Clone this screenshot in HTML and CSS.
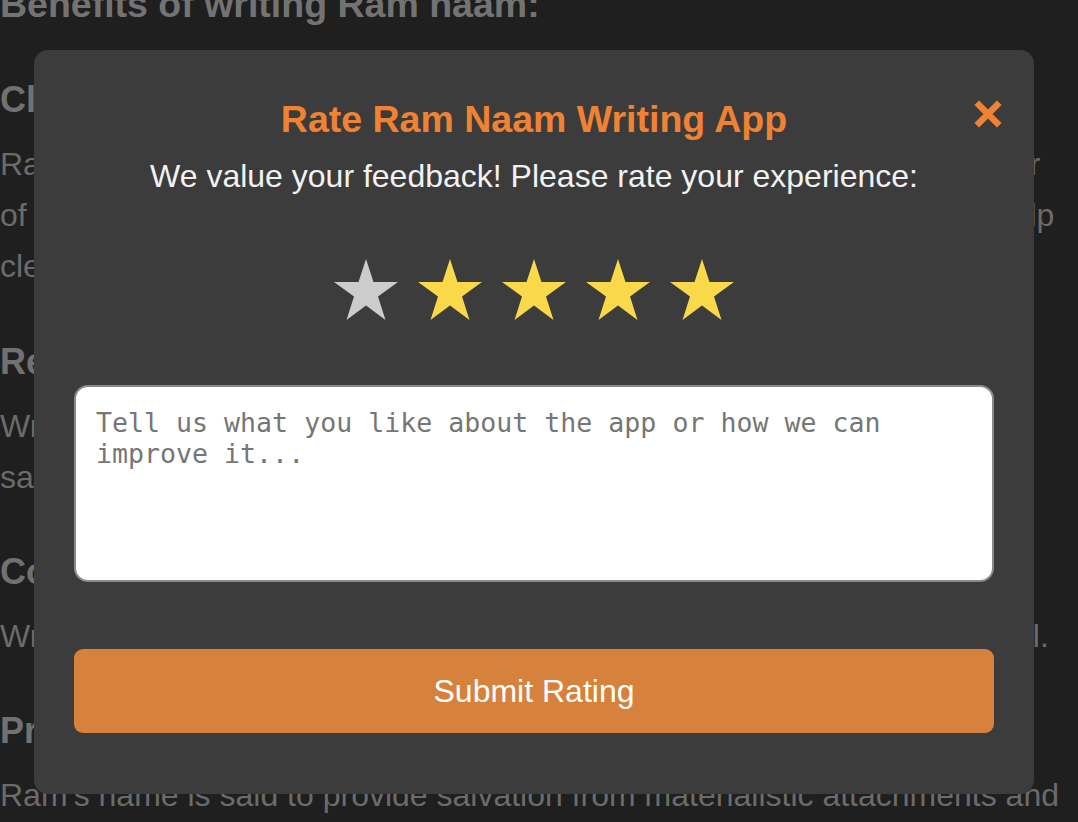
FILE: index.html
```html
<!DOCTYPE html>
<html lang="en">
<head>
<meta charset="utf-8">
<title>Rate Ram Naam Writing App</title>
<link rel="stylesheet" href="styles.css">
</head>
<body>
<main class="page">
  <h2 class="page-title">Benefits of writing Ram naam:</h2>
  <section class="benefit">
    <h3>Cleansing of the mind</h3>
    <p>Ram naam writing is said to cleanse the mind, heart and soul of the writer<br>of the devotee. The constant repetition of the divine name is known to help<br>clear negative thoughts and brings peace.</p>
  </section>
  <section class="benefit">
    <h3>Relief from stress</h3>
    <p>Writing Ram naam regularly helps in relieving stress and anxiety,<br>same as the effect of meditation.</p>
  </section>
  <section class="benefit">
    <h3>Connection with the divine</h3>
    <p>Writing Ram naam regularly helps to build a strong bonds with the eternal.</p>
  </section>
  <section class="benefit">
    <h3>Protection</h3>
    <p>Ram's name is said to provide salvation from materialistic attachments and<br>worldly sorrows.</p>
  </section>
</main>

<div class="overlay">
  <div class="modal">
    <button class="close" aria-label="Close">
      <svg viewBox="0 0 28 28" width="28" height="28"><path d="M5 5 L23 23 M23 5 L5 23" stroke="#f08233" stroke-width="6.5" stroke-linecap="square"/></svg>
    </button>
    <h2 class="modal-title">Rate Ram Naam Writing App</h2>
    <p class="modal-sub">We value your feedback! Please rate your experience:</p>
    <div class="stars">
      <svg class="star off" viewBox="0 0 64 64"><polygon points="32,1 39.5,24 64,24 44,38.5 51.5,62 32,47.5 12.5,62 20,38.5 0,24 24.5,24"/></svg>
      <svg class="star on" viewBox="0 0 64 64"><polygon points="32,1 39.5,24 64,24 44,38.5 51.5,62 32,47.5 12.5,62 20,38.5 0,24 24.5,24"/></svg>
      <svg class="star on" viewBox="0 0 64 64"><polygon points="32,1 39.5,24 64,24 44,38.5 51.5,62 32,47.5 12.5,62 20,38.5 0,24 24.5,24"/></svg>
      <svg class="star on" viewBox="0 0 64 64"><polygon points="32,1 39.5,24 64,24 44,38.5 51.5,62 32,47.5 12.5,62 20,38.5 0,24 24.5,24"/></svg>
      <svg class="star on" viewBox="0 0 64 64"><polygon points="32,1 39.5,24 64,24 44,38.5 51.5,62 32,47.5 12.5,62 20,38.5 0,24 24.5,24"/></svg>
    </div>
    <textarea class="feedback" placeholder="Tell us what you like about the app or how we can improve it..."></textarea>
    <button class="submit">Submit Rating</button>
  </div>
</div>
</body>
</html>
```

FILE: styles.css
```css
html, body {
  margin: 0;
  padding: 0;
}
html {
  overflow: hidden;
}
body {
  background: #1f1f1f;
  font-family: "Liberation Sans", Arial, sans-serif;
  color: #6e6e6e;
  overflow: hidden;
  height: 822px;
}
.page {
  margin-top: -18px;
  white-space: nowrap;
}
.page-title {
  font-size: 37.5px;
  line-height: 45px;
  font-weight: bold;
  margin: 0 0 50px 0;
  color: #737373;
}
.benefit h3 {
  font-size: 36px;
  line-height: 45px;
  font-weight: bold;
  margin: 0 0 17px 0;
  color: #717171;
}
.benefit p {
  font-size: 32px;
  line-height: 51.2px;
  margin: 0 0 46px 0;
  color: #6b6b6b;
}

.overlay {
  position: fixed;
  inset: 0;
}
.modal {
  position: absolute;
  left: 34px;
  top: 50px;
  width: 1000px;
  height: 744px;
  box-sizing: border-box;
  background: #3c3c3c;
  border-radius: 14px;
  padding: 48px 40px 0 40px;
  display: flex;
  flex-direction: column;
  align-items: stretch;
}
.close {
  position: absolute;
  top: 50px;
  right: 32px;
  background: none;
  border: 0;
  padding: 0;
  width: 28px;
  height: 28px;
  cursor: pointer;
}
.close svg { display: block; }
.modal-title {
  margin: 0;
  text-align: center;
  color: #f08233;
  font-size: 37.5px;
  font-weight: bold;
  line-height: 42px;
}
.modal-sub {
  margin: 16px 0 0 0;
  text-align: center;
  color: #f2f2f2;
  font-size: 32px;
  line-height: 40px;
}
.stars {
  display: flex;
  justify-content: center;
  gap: 20px;
  margin-top: 62px;
}
.star {
  width: 64px;
  height: 64px;
  display: block;
}
.star.off { fill: #cccccc; }
.star.on { fill: #f9d84a; }
.feedback {
  margin-top: 63px;
  height: 197px;
  box-sizing: border-box;
  width: 100%;
  border: 2px solid #8a8a8a;
  border-radius: 14px;
  background: #ffffff;
  padding: 20px 20px;
  font-family: "DejaVu Sans Mono", monospace;
  font-size: 26.6px;
  line-height: 31px;
  resize: none;
  color: #333;
}
.feedback::placeholder {
  color: #767676;
}
.submit {
  margin-top: 67px;
  height: 84px;
  width: 100%;
  border: 0;
  border-radius: 9px;
  background: #d7823c;
  color: #ffffff;
  font-family: "Liberation Sans", Arial, sans-serif;
  font-size: 32px;
  cursor: pointer;
}
```
